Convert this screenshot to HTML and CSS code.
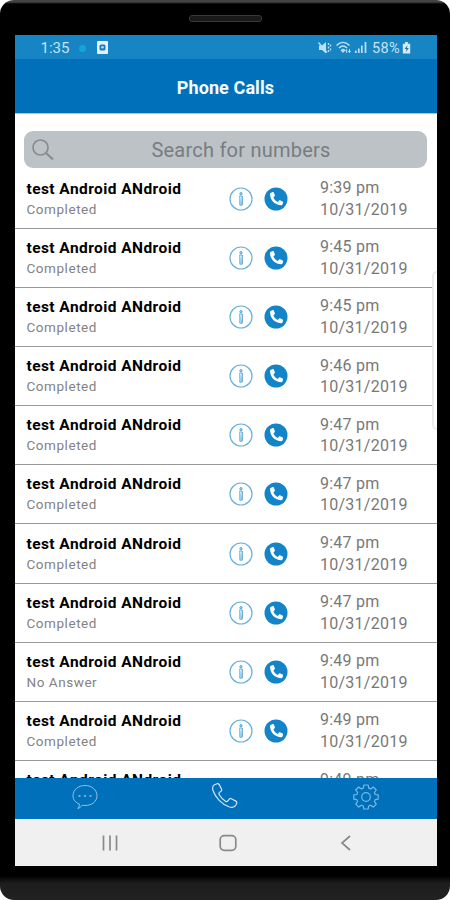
FILE: index.html
```
<!DOCTYPE html>
<html lang="en">
  <head>
    <meta charset="UTF-8" />
    <meta name="viewport" content="width=device-width, initial-scale=1.0" />
    <title>Phone Calls</title>
    <link rel="stylesheet" href="styles.css" />
  </head>
  <body>
    <!-- Icons used in every call row -->
    <svg class="sprite">
      <symbol id="info" viewBox="0 0 24 24">
        <circle cx="12" cy="12" r="11" fill="none" stroke="#68b0dc" stroke-width="1.2" />
        <circle cx="12" cy="6.7" r="1.2" fill="#a9d3ec" stroke="#3d9bd1" stroke-width="0.8" />
        <path d="M10.3 9h3v8.200h.7M10.800 9v9.200h2.400V9" fill="#b9dcf0" stroke="#5eaad9" stroke-width="0.9" />
      </symbol>
      <symbol id="call" viewBox="0 0 24 24">
        <circle cx="12" cy="12" r="11.5" fill="#1384c8" />
        <path d="M7 5.7 8.8 5c.4-.1.8 0 1 .5l1.1 2.8c.1.4 0 .8-.3 1L9.4 10.4c1 2.1 2.4 3.500 4.500 4.500l1.100-1.300c.3-.3.7-.4 1-.3l2.600 1.200c.4.2.6.6.5 1l-.6 2c-.1.5-.5.8-1 .8C11 18.300 6 13.300 6 6.800c0-.5.4-.9 1-1.100z" fill="#fff" />
      </symbol>
    </svg>

    <div class="phone">
      <div class="speaker"></div>
      <main class="screen">
        <div class="status-bar">
          <span class="clock">1:35</span>
          <span class="dot"></span>
          <svg class="app-icon" viewBox="0 0 11 13">
            <rect width="11" height="13" rx="1" fill="#e3f1fa" />
            <rect x="2.500" y="3.500" width="6" height="6" rx="1.500" fill="#1e7db8" />
            <circle cx="5.500" cy="6.300" r="1.300" fill="#b9dcf0" />
          </svg>
          <svg class="status-icons" viewBox="0 0 52 16" fill="none" stroke="#c0e0f2">
            <path d="M2 5.500h3l4-3.500v11.500L5 10H2z" fill="#c0e0f2" stroke="none" />
            <path d="M1.500 2.500 10 12.500" stroke-width="1.200" />
            <path d="M11.500 3v2M11.500 6.500v2M11.500 10v2M13.500 4.500v2M13.500 8.500v2" stroke-width="1.300" />
            <path d="M19.500 5.500c4-4 9-4 13 0M22 8c2.500-2.500 5.500-2.500 8 0M24.500 10.300c1-1 2-1 3 0L26 12z" stroke-width="1.400" />
            <path d="M29.700 13V9.500M28.500 11l1.200-1.500M32.500 9v3.500M31.300 11l1.200 1.500 1.200-1.500" />
            <path d="M38.800 13v-2.500M41.800 13V8.500M44.800 13V5.500M48.500 13V2" stroke-width="1.700" />
          </svg>
          <span class="battery-level">58%</span>
          <svg class="battery" viewBox="0 0 9 13">
            <path d="M3 0h3v2h2.500v10.500h-8V2H3z" fill="#d5ebf7" />
            <path d="M5.500 3.500 2.500 7.500h2L3.800 10.800 7 6.500H5z" fill="#28739f" />
          </svg>
        </div>
        <header class="header">
          <h1>Phone Calls</h1>
        </header>

        <section class="content">
          <div class="search">
            <svg viewBox="0 0 24 24" fill="none" stroke="#878c91" stroke-width="1.700">
              <circle cx="9.500" cy="9.500" r="7.500" />
              <path d="m15 15 7 6.500" stroke-width="2.200" />
            </svg>
            <span>Search for numbers</span>
          </div>
          <ul class="calls"></ul>
          <div class="edge-handle"></div>
        </section>

        <nav class="tabs">
          <svg viewBox="0 0 26 26" fill="none" stroke="#8fc3e8">
            <path d="M7.500 20.200C3.500 18.500 1 15.500 1 11.700 1 5.900 6.200 1.500 13 1.500s12 4.400 12 10.200S19.800 21.500 13 21.500c-1.200 0-2-.1-3-.3-1 1.700-2.600 3-4.200 3.300 1-1.300 1.600-2.600 1.700-4.300z" />
            <path d="M6.500 12h2M12 12h2M17.500 12h2" stroke-width="1.700" />
          </svg>
          <svg class="tab-calls" viewBox="0 0 26 26" fill="none" stroke="#d2e7f6" stroke-width="1.200">
            <path d="M2.500 1.700 5 .7c1-.4 1.700 0 2.200.9L9.500 6c.4.900.2 1.700-.5 2.200L7.500 9.400c-.8.700-.7 1.500-.2 2.300 1.500 2.600 3.600 4.900 6.200 6.500.9.600 1.700.5 2.300-.3l1.500-1.800c.6-.7 1.300-.8 2.100-.4l4.400 2.400c.9.500 1.200 1.200.9 2.100-1 3.400-4 4.700-7.200 3.800C9.500 21.500 3.500 14.500 1 7.500.3 5 .5 2.700 2.500 1.700z" />
          </svg>
          <svg viewBox="0 0 26 26" fill="none" stroke="#79b8e3" stroke-width="1.200">
            <path d="M10.800 1h4.400l.5 3.100 2 .8L20.300 3l3 3-1.900 2.500.8 2 3 .4v4.200l-3 .5-.8 2 1.900 2.500-3 3-2.600-1.900-2 .8-.5 3h-4.400l-.5-3-2-.8-2.600 1.900-3-3 1.900-2.500-.8-2-3-.5v-4.200l3-.4.8-2L2.700 6l3-3 2.600 1.900 2-.8z" stroke-linejoin="round" />
            <circle cx="13" cy="13" r="4.300" />
          </svg>
        </nav>
        <div class="system-nav">
          <svg viewBox="0 0 18 18" fill="none" stroke="#898989" stroke-width="1.700">
            <path d="M2.500 1.500v15M9 1.500v15M15.500 1.500v15" />
          </svg>
          <svg viewBox="0 0 18 18" fill="none" stroke="#898989" stroke-width="1.700">
            <rect x="1.200" y="1.700" width="15.600" height="14.600" rx="4" />
          </svg>
          <svg viewBox="0 0 18 18" fill="none" stroke="#898989" stroke-width="1.700">
            <path d="M13 2 5 9l8 7" />
          </svg>
        </div>
      </main>
    </div>
    <script src="script.js"></script>
  </body>
</html>
```
FILE: styles.css
```
* {
  box-sizing: border-box;
}

body {
  margin: 0;
  background: #fff;
  font-family: Roboto, "Liberation Sans", sans-serif;
}

.sprite {
  display: none;
}

/* Phone frame */
.phone {
  width: 450px;
  height: 900px;
  padding: 0 13.5px 0 14.5px;
  border-radius: 14px;
  overflow: hidden;
  background: linear-gradient(
    #444 0,
    #444 2px,
    #000 4px,
    #000 876px,
    #1d1d1d 883px,
    #222 900px
  );
}

.speaker {
  width: 73px;
  height: 7px;
  margin: 15px auto 13px;
  border: 1px solid #393939;
  border-radius: 3px;
  background: #191919;
}

.phone::before {
  content: "";
  display: table;
}

.screen {
  display: flex;
  flex-direction: column;
  height: 831px;
  background: #fff;
}

/* Status bar */
.status-bar {
  display: flex;
  align-items: center;
  flex: 0 0 24px;
  padding: 2px 25.5px 0 26px;
  background: #1785c4;
  color: #c5e3f4;
  font-size: 15px;
}

.dot {
  width: 7px;
  height: 7px;
  margin-left: 10px;
  border-radius: 50%;
  background: #12a5dd;
}

.app-icon {
  width: 11px;
  height: 13px;
  margin: -2px 0 0 11px;
}

.status-icons {
  width: 52px;
  height: 16px;
  margin-left: auto;
}

.battery-level {
  margin-left: 3px;
  font-size: 14.5px;
  letter-spacing: 0.4px;
}

.battery {
  width: 9px;
  height: 12px;
  margin-left: 2px;
}

.header {
  display: flex;
  align-items: center;
  justify-content: center;
  flex: 0 0 54px;
  padding-top: 2px;
  background: #0070bb;
}

.header h1 {
  margin: 0;
  color: #f5fbff;
  font-size: 18px;
  font-weight: 700;
  letter-spacing: 0.1px;
}

/* Calls */
.content {
  position: relative;
  flex: 1;
  min-height: 0;
  padding-top: 17px;
  border-top: 1px solid #a6c8e4;
  overflow: hidden;
}

.search {
  display: flex;
  align-items: center;
  height: 37px;
  margin: 0 9.5px;
  padding-left: 7px;
  border-radius: 9px;
  background: #bdc2c6;
  color: #777d82;
  font-size: 20px;
}

.search svg {
  width: 24px;
  height: 24px;
}

.search span {
  flex: 1;
  text-align: center;
  letter-spacing: 0.23px;
}

.calls {
  margin: 1.6px 0 0;
  padding: 0;
  list-style: none;
}

.call {
  display: grid;
  grid-template-columns: 202px 35.5px 56px 1fr;
  align-items: center;
  height: 59.15px;
  padding-left: 12px;
  border-bottom: 1px solid #999;
}

.call svg {
  width: 24px;
  height: 24px;
}

.name {
  color: #000;
  font-size: 15.5px;
  font-weight: 700;
  line-height: 20px;
  letter-spacing: 0.43px;
}

.result {
  color: #828282;
  font-size: 13.5px;
  line-height: 20px;
  letter-spacing: 0.55px;
}

.when {
  color: #787878;
  font-size: 16px;
  line-height: 21.5px;
  letter-spacing: 0.25px;
}

.edge-handle {
  position: absolute;
  right: 0;
  top: 157px;
  width: 5px;
  height: 159px;
  border: 2px solid #ececec;
  border-right: 0;
  border-radius: 5px 0 0 5px;
  background: #fff;
}

/* Bottom bars */
.tabs {
  display: flex;
  align-items: center;
  justify-content: space-around;
  flex: 0 0 41px;
  padding-bottom: 3px;
  background: #0070bb;
}

.tabs svg {
  width: 26px;
  height: 26px;
}

.tabs .tab-calls {
  margin-top: -3px;
}

.system-nav {
  display: flex;
  align-items: center;
  justify-content: space-between;
  flex: 0 0 47px;
  padding: 1px 82px 0 86px;
  background: #f0f0f0;
}

.system-nav svg {
  width: 18px;
  height: 18px;
}
```
FILE: script.js
```
const calls = [
  ["9:39 pm", "Completed"],
  ["9:45 pm", "Completed"],
  ["9:45 pm", "Completed"],
  ["9:46 pm", "Completed"],
  ["9:47 pm", "Completed"],
  ["9:47 pm", "Completed"],
  ["9:47 pm", "Completed"],
  ["9:47 pm", "Completed"],
  ["9:49 pm", "No Answer"],
  ["9:49 pm", "Completed"],
  ["9:49 pm", "Completed"],
];

document.querySelector(".calls").innerHTML = calls
  .map(
    ([time, result]) => `
      <li class="call">
        <div>
          <div class="name">test Android ANdroid</div>
          <div class="result">${result}</div>
        </div>
        <svg><use href="#info" /></svg>
        <svg><use href="#call" /></svg>
        <div class="when">${time}<br />10/31/2019</div>
      </li>`
  )
  .join("");
```
